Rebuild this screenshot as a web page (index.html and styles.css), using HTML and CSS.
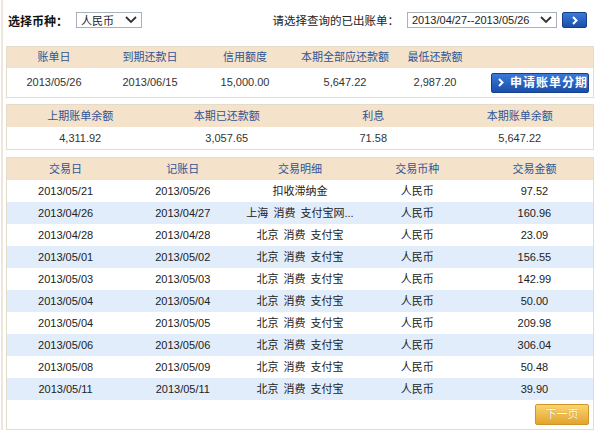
FILE: index.html
```html
<!DOCTYPE html>
<html lang="zh-CN">
<head>
<meta charset="utf-8">
<title>账单查询</title>
<link rel="stylesheet" href="styles.css">
</head>
<body>
<div class="page">
  <div class="topbar">
    <div class="group">
      <span class="label-bold">选择币种：</span>
      <div class="select sel-cur"><span>人民币</span><svg class="chev" width="12" height="8" viewBox="0 0 12 8"><polyline points="1,1 6,6 11,1" fill="none" stroke="#333" stroke-width="1.8"/></svg></div>
    </div>
    <div class="group">
      <span class="label">请选择查询的已出账单：</span>
      <div class="select sel-bill"><span>2013/04/27--2013/05/26</span><svg class="chev" width="12" height="8" viewBox="0 0 12 8"><polyline points="1,1 6,6 11,1" fill="none" stroke="#333" stroke-width="1.8"/></svg></div>
      <div class="btn-blue btn-go"><svg width="6" height="9" viewBox="0 0 6 9"><polyline points="1,1 4.5,4.5 1,8" fill="none" stroke="#fff" stroke-width="2"/></svg></div>
    </div>
  </div>

  <div class="box summary">
    <div class="row head">
      <div>账单日</div><div>到期还款日</div><div>信用额度</div><div>本期全部应还款额</div><div>最低还款额</div><div></div>
    </div>
    <div class="row data">
      <div>2013/05/26</div><div>2013/06/15</div><div>15,000.00</div><div>5,647.22</div><div>2,987.20</div>
      <div class="cell-btn"><div class="btn-blue btn-apply"><svg width="6" height="9" viewBox="0 0 6 9"><polyline points="1,1 4.5,4.5 1,8" fill="none" stroke="#fff" stroke-width="2"/></svg><span>申请账单分期</span></div></div>
    </div>
  </div>

  <div class="box balance">
    <div class="row head">
      <div>上期账单余额</div><div>本期已还款额</div><div>利息</div><div>本期账单余额</div>
    </div>
    <div class="row data">
      <div>4,311.92</div><div>3,057.65</div><div>71.58</div><div>5,647.22</div>
    </div>
  </div>

  <div class="box trans">
    <div class="row head">
      <div>交易日</div><div>记账日</div><div>交易明细</div><div>交易币种</div><div>交易金额</div>
    </div>
    <div class="row tr"><div>2013/05/21</div><div>2013/05/26</div><div>扣收滞纳金</div><div>人民币</div><div>97.52</div></div>
    <div class="row tr alt"><div>2013/04/26</div><div>2013/04/27</div><div>上海 消费 支付宝网...</div><div>人民币</div><div>160.96</div></div>
    <div class="row tr"><div>2013/04/28</div><div>2013/04/28</div><div>北京 消费 支付宝</div><div>人民币</div><div>23.09</div></div>
    <div class="row tr alt"><div>2013/05/01</div><div>2013/05/02</div><div>北京 消费 支付宝</div><div>人民币</div><div>156.55</div></div>
    <div class="row tr"><div>2013/05/03</div><div>2013/05/03</div><div>北京 消费 支付宝</div><div>人民币</div><div>142.99</div></div>
    <div class="row tr alt"><div>2013/05/04</div><div>2013/05/04</div><div>北京 消费 支付宝</div><div>人民币</div><div>50.00</div></div>
    <div class="row tr"><div>2013/05/04</div><div>2013/05/05</div><div>北京 消费 支付宝</div><div>人民币</div><div>209.98</div></div>
    <div class="row tr alt"><div>2013/05/06</div><div>2013/05/06</div><div>北京 消费 支付宝</div><div>人民币</div><div>306.04</div></div>
    <div class="row tr"><div>2013/05/08</div><div>2013/05/09</div><div>北京 消费 支付宝</div><div>人民币</div><div>50.48</div></div>
    <div class="row tr alt"><div>2013/05/11</div><div>2013/05/11</div><div>北京 消费 支付宝</div><div>人民币</div><div>39.90</div></div>
    <div class="footer"><div class="btn-next">下一页</div></div>
  </div>
</div>
</body>
</html>
```
FILE: styles.css
```css
html, body {
  margin: 0;
  padding: 0;
  background: #fff;
}
body {
  font-family: "Liberation Sans", Arial, "Noto Sans CJK SC", sans-serif;
  font-size: 11px;
  color: #222;
  width: 600px;
  height: 430px;
  overflow: hidden;
}
.page {
  margin-left: 1px;
  border-left: 2px solid #ece7da;
  padding: 0 6px 0 3px;
  height: 430px;
  box-sizing: border-box;
  overflow: hidden;
}
.topbar {
  height: 40px;
  display: flex;
  align-items: center;
  justify-content: space-between;
  padding: 0 7px 0 2px;
  margin-bottom: 6px;
}
.group {
  display: flex;
  align-items: center;
}
.label-bold {
  font-weight: bold;
  font-size: 12px;
  color: #111;
  margin-right: 8px;
}
.label {
  font-size: 11.5px;
  color: #222;
  margin-right: 8px;
}
.select {
  height: 16px;
  border: 1px solid #a9b0b8;
  background: #fff;
  display: flex;
  align-items: center;
  justify-content: space-between;
  padding: 0 4px 0 4px;
  box-sizing: border-box;
  font-size: 11px;
  color: #222;
}
.sel-cur { width: 66px; }
.sel-bill { width: 150px; margin-right: 5px; }
.btn-blue {
  background: linear-gradient(#3a7ad8, #1a4ea8);
  border: 1px solid #143f8a;
  border-radius: 2px;
  box-sizing: border-box;
  display: flex;
  align-items: center;
  justify-content: center;
  color: #fff;
  line-height: 1;
}
.btn-go {
  width: 25px;
  height: 16px;
}
.btn-apply {
  width: 98px;
  height: 20px;
  font-weight: bold;
  font-size: 12px;
  justify-content: flex-start;
  padding-left: 6px;
  gap: 6px;
  letter-spacing: 1px;
  white-space: nowrap;
}
.box {
  border: 1px solid #e3dccc;
  margin-bottom: 6px;
}
.row {
  display: grid;
  text-align: center;
}
.head {
  background: #f5e2ca;
  color: #2f5596;
}
.summary .row { grid-template-columns: 94px 98px 92px 108px 72px 1fr; }
.summary .head { height: 21px; line-height: 21px; }
.summary .data { height: 29px; line-height: 29px; color: #333; }
.cell-btn {
  display: flex;
  align-items: center;
  justify-content: flex-end;
  padding-right: 4px;
}
.balance { margin-bottom: 7px; }
.balance .row { grid-template-columns: repeat(4, 1fr); height: 22px; line-height: 22px; }
.balance .data { color: #333; }
.trans {
  height: 273px;
  box-sizing: border-box;
  margin-bottom: 0;
}
.trans .row { grid-template-columns: repeat(5, 1fr); height: 22px; line-height: 22px; }
.trans .tr { background: #fff; color: #222; word-spacing: 2px; }
.trans .tr.alt { background: #e1edfa; }
.footer {
  display: flex;
  justify-content: flex-end;
  padding: 4px 4px 0 0;
}
.btn-next {
  width: 54px;
  height: 21px;
  box-sizing: border-box;
  border: 1px solid #cf9426;
  border-radius: 2px;
  background: linear-gradient(#fad470, #e3a42c);
  color: #fff;
  text-align: center;
  line-height: 19px;
  font-size: 11px;
  text-shadow: 0 0 1px #b77d12;
}
```
